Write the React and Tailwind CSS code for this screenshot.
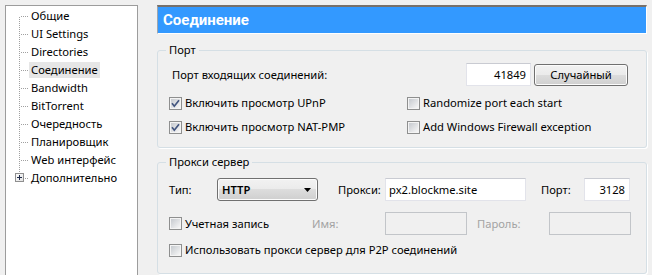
import React from "react";

const TREE = [
  "Общие",
  "UI Settings",
  "Directories",
  "Соединение",
  "Bandwidth",
  "BitTorrent",
  "Очередность",
  "Планировщик",
  "Web интерфейс",
  "Дополнительно",
];

function TreeLines({ first, last }) {
  const dots = [];
  const vStart = first ? 10 : 0;
  const vEnd = last ? 4 : 18;
  for (let y = vStart; y < vEnd; y += 2) dots.push(<rect key={"v" + y} x="13" y={y} width="1" height="1" fill="#a0a0a0" />);
  const hStart = last ? 19 : 15;
  for (let x = hStart; x < 23; x += 2) dots.push(<rect key={"h" + x} x={x} y="9" width="1" height="1" fill="#a0a0a0" />);
  return (
    <svg width="23" height="18" className="shrink-0">
      {dots}
      {last && (
        <g>
          <defs>
            <linearGradient id="tb" x1="0" y1="0" x2="1" y2="1">
              <stop offset="0" stopColor="#ffffff" />
              <stop offset="1" stopColor="#e0e0e0" />
            </linearGradient>
          </defs>
          <rect x="9.5" y="4.5" width="8" height="8" fill="url(#tb)" stroke="#8f8f8f" />
          <rect x="11" y="8" width="5" height="1" fill="#1f2b4a" />
          <rect x="13" y="6" width="1" height="5" fill="#1f2b4a" />
        </g>
      )}
    </svg>
  );
}

function Check({ checked }) {
  return (
    <svg width="13" height="13" className="shrink-0">
      <defs>
        <linearGradient id="cbg" x1="0" y1="0" x2="1" y2="1">
          <stop offset="0" stopColor="#c6cacf" />
          <stop offset="1" stopColor="#f7f7f7" />
        </linearGradient>
      </defs>
      <rect x="0.5" y="0.5" width="12" height="12" fill="#f4f4f4" stroke="#8e8f8f" />
      <rect x="2" y="2" width="9" height="9" fill="url(#cbg)" />
      {checked && (
        <path d="M3 6.3 L5.3 9.2 L10 3.3" fill="none" stroke="#42557f" strokeWidth="1.7" />
      )}
    </svg>
  );
}

function CheckRow({ checked, label, className }) {
  return (
    <div className={"flex items-center gap-[3px] h-[16px] " + (className || "")}>
      <Check checked={checked} />
      <span className="whitespace-nowrap">{label}</span>
    </div>
  );
}

export default function App() {
  return (
    <div className="w-[652px] h-[275px] overflow-hidden bg-[#f0f0f0] flex items-start pt-[5px] pl-[5px] text-[11.2px] leading-[16px] text-[#000] font-['Noto_Sans',sans-serif]">
      <div className="w-[133px] h-[290px] shrink-0 bg-white border border-[#9c9c9c] pt-[1px]">
        {TREE.map((t, i) => (
          <div key={t} className="flex h-[18px] items-center">
            <TreeLines first={i === 0} last={i === TREE.length - 1} />
            <span className={i === 3 ? "px-[2px] bg-[#e6e6e6] whitespace-nowrap" : "px-[2px] whitespace-nowrap"}>{t}</span>
          </div>
        ))}
      </div>

      <div className="ml-[19px] w-[490px] flex flex-col">
        <div className="h-[29px] bg-[#3399ff] border-t-2 border-t-[#77706a] border-l border-l-[#9fa6ad] border-r border-r-white border-b border-b-white flex items-center pl-[5px] text-white font-bold text-[15px] font-['Roboto',sans-serif]">
          Соединение
        </div>

        <fieldset className="mt-[8px] border border-[#d5dfe5] rounded-[3px] px-[8px] pt-[5px] pb-[12px] shadow-[1px_1px_0_#ffffff]">
          <legend className="px-[3px] leading-[16px]">Порт</legend>
          <div className="pl-[3px]">
            <div className="flex items-center h-[23px]">
              <span className="w-[297px] pl-[3px] whitespace-nowrap">Порт входящих соединений:</span>
              <div className="w-[65px] h-[23px] bg-white border border-[#e2e3ea] border-t-[#c9cbd2] flex items-center justify-end pr-[4px]">41849</div>
              <div className="ml-[3px] w-[94px] h-[22px] rounded-[3px] border border-[#707070] bg-[linear-gradient(#f2f2f2,#ebebeb_50%,#dddddd_50%,#cfcfcf)] shadow-[inset_0_0_0_1px_#fcfcfc] flex items-center justify-center">
                Случайный
              </div>
            </div>
            <div className="flex mt-[9px]">
              <CheckRow checked label="Включить просмотр UPnP" className="w-[238px]" />
              <CheckRow label="Randomize port each start" />
            </div>
            <div className="flex mt-[8px]">
              <CheckRow checked label="Включить просмотр NAT-PMP" className="w-[238px]" />
              <CheckRow label="Add Windows Firewall exception" />
            </div>
          </div>
        </fieldset>

        <fieldset className="mt-[6px] border border-[#d5dfe5] rounded-[3px] px-[8px] pt-[8px] pb-[15px] shadow-[1px_1px_0_#ffffff]">
          <legend className="px-[3px] leading-[16px]">Прокси сервер</legend>
          <div className="pl-[3px]">
            <div className="flex items-center h-[23px]">
              <span className="w-[48px]">Тип:</span>
              <div className="w-[101px] h-[23px] rounded-[3px] border border-[#707070] bg-[linear-gradient(#f2f2f2,#ebebeb_50%,#dddddd_50%,#cfcfcf)] shadow-[inset_0_0_0_1px_#fcfcfc] flex items-center justify-between pl-[4px] pr-[6px] font-semibold">
                <span>HTTP</span>
                <svg width="7" height="4"><path d="M0 0H7L3.5 4Z" fill="#000" /></svg>
              </div>
              <span className="w-[67px] pl-[20px] whitespace-nowrap">Прокси:</span>
              <div className="w-[141px] h-[23px] bg-white border border-[#e2e3ea] border-t-[#c9cbd2] flex items-center pl-[3px] whitespace-nowrap">px2.blockme.site</div>
              <span className="w-[58px] pl-[15px]">Порт:</span>
              <div className="w-[46px] h-[23px] bg-white border border-[#e2e3ea] border-t-[#c9cbd2] flex items-center justify-end pr-[4px]">3128</div>
            </div>
            <div className="flex items-center h-[23px] mt-[11px]">
              <CheckRow label="Учетная запись" className="w-[143px]" />
              <span className="w-[73px] text-[#a3a3a3]">Имя:</span>
              <div className="w-[82px] h-[23px] border border-[#c2c5c9] bg-[#f0f0f0]" />
              <span className="w-[82px] pl-[10px] text-[#a3a3a3]">Пароль:</span>
              <div className="w-[82px] h-[23px] border border-[#c2c5c9] bg-[#f0f0f0]" />
            </div>
            <CheckRow label="Использовать прокси сервер для P2P соединений" className="mt-[7px]" />
          </div>
        </fieldset>
      </div>
    </div>
  );
}
